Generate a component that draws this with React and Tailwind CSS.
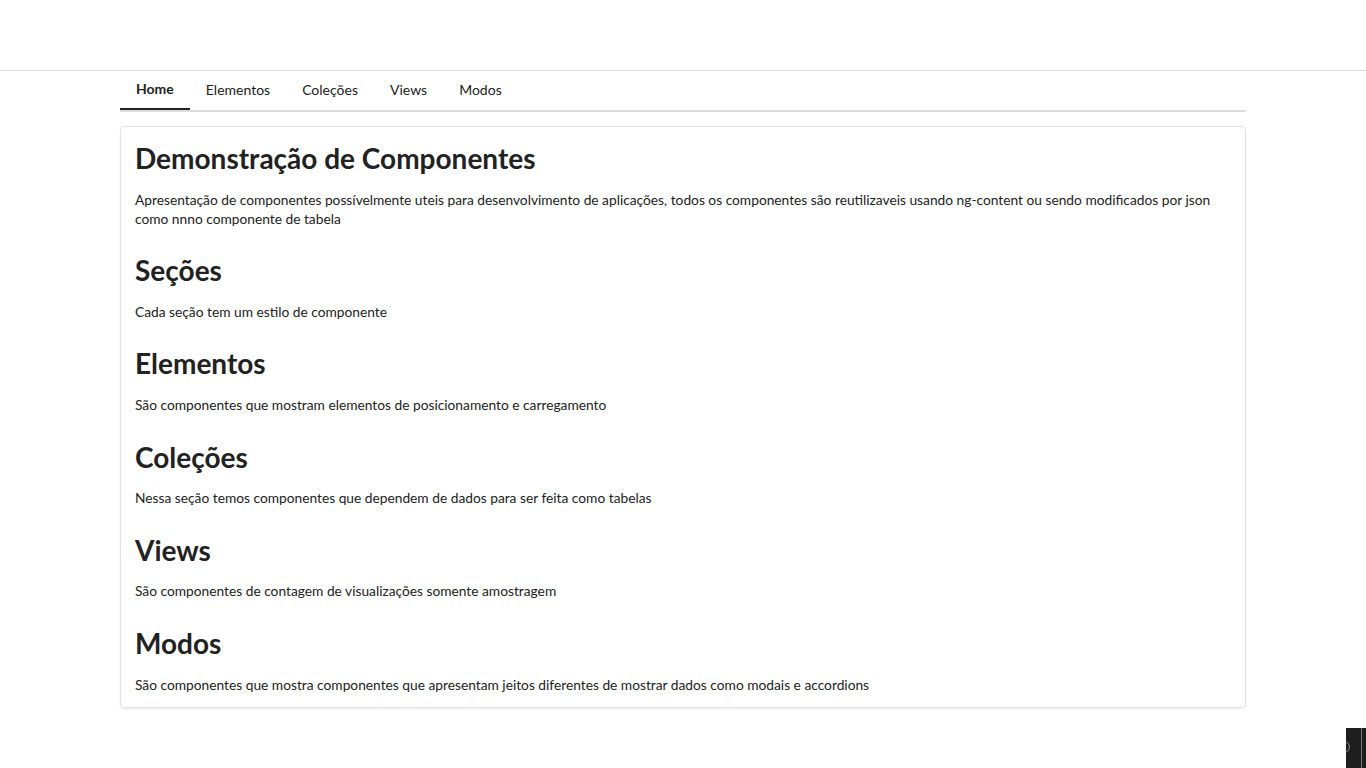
const sections = [
  {
    title: 'Demonstração de Componentes',
    text: 'Apresentação de componentes possívelmente uteis para desenvolvimento de aplicações, todos os componentes são reutilizaveis usando ng-content ou sendo modificados por json como nnno componente de tabela',
  },
  { title: 'Seções', text: 'Cada seção tem um estilo de componente' },
  { title: 'Elementos', text: 'São componentes que mostram elementos de posicionamento e carregamento' },
  { title: 'Coleções', text: 'Nessa seção temos componentes que dependem de dados para ser feita como tabelas' },
  { title: 'Views', text: 'São componentes de contagem de visualizações somente amostragem' },
  {
    title: 'Modos',
    text: 'São componentes que mostra componentes que apresentam jeitos diferentes de mostrar dados como modais e accordions',
  },
];

const tabs = ['Home', 'Elementos', 'Coleções', 'Views', 'Modos'];

export default function App() {
  return (
    <div className="min-h-screen bg-white text-[#222] font-['Lato','Liberation_Sans',sans-serif]">
      <header className="h-[71px] border-b border-[#dcdcdc]" />

      <main className="mx-[120px]">
        <nav className="flex border-b-2 border-[#dcdcdc] text-[14px]">
          {tabs.map((t, i) => (
            <div
              key={t}
              className={
                i === 0
                  ? 'px-4 pb-[2px] h-[39px] flex items-center font-bold -mb-[2px] border-b-2 border-[#222]'
                  : 'px-4 pb-[2px] h-[39px] flex items-center'
              }
            >
              {t}
            </div>
          ))}
        </nav>

        <section className="mt-[14px] border border-[#e2e2e2] rounded shadow-[0_1px_2px_rgba(0,0,0,0.08)] px-[14px] pt-[15px] pb-[13px]">
          {sections.map((s, i) => (
            <div key={s.title}>
              <h2 className="text-[28px] leading-[1.2] font-bold mb-[14px]">{s.title}</h2>
              <p className={i === sections.length - 1 ? 'text-[13.75px] leading-[19px]' : 'text-[13.75px] leading-[19px] mb-[26.6px]'}>
                {s.text}
              </p>
            </div>
          ))}
        </section>
      </main>

      <div className="fixed right-0 bottom-0 w-5 h-10 bg-[#1e1e1e] overflow-hidden">
        <div className="absolute left-[-8px] top-[13px] w-[12px] h-[12px] rounded-full border border-[#888]" />
        <div className="absolute left-[15px] top-0 bottom-0 w-px bg-[#777]" />
      </div>
    </div>
  );
}
